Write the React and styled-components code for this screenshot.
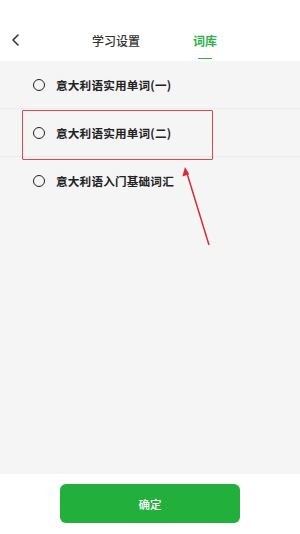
import React from "react";
import styled, { createGlobalStyle } from "styled-components";

const Global = createGlobalStyle`
  html, body { margin: 0; padding: 0; }
  body { font-family: "Noto Sans CJK SC", "Noto Sans", sans-serif; background: #fff; }
`;

const Page = styled.div`
  width: 300px;
  height: 534px;
  display: flex;
  flex-direction: column;
  position: relative;
  overflow: hidden;
`;

const Header = styled.div`
  height: 61px;
  background: #fff;
  position: relative;
  display: flex;
  align-items: flex-end;
  padding-bottom: 11px;
  box-sizing: border-box;
`;

const BackBtn = styled.div`
  width: 32px;
  height: 20px;
  display: flex;
  align-items: center;
  justify-content: center;
`;

const Tabs = styled.div`
  flex: 1;
  display: flex;
  padding-left: 60px;
  gap: 53px;
`;

const Tab = styled.div`
  position: relative;
  font-size: 12px;
  font-weight: ${p => (p.$active ? 600 : 500)};
  color: ${p => (p.$active ? "#2fb24a" : "#333")};
  line-height: 18px;
  &::after {
    content: "";
    display: ${p => (p.$active ? "block" : "none")};
    position: absolute;
    left: 50%;
    transform: translateX(-50%);
    bottom: -9px;
    width: 14px;
    height: 1px;
    background: #2fb24a;
  }
`;

const List = styled.div`
  flex: 1;
  background: #f5f5f5;
  display: flex;
  flex-direction: column;
`;

const Row = styled.div`
  height: 48px;
  display: flex;
  align-items: center;
  padding-left: 33px;
  box-sizing: border-box;
  border-bottom: ${p => (p.$last ? "none" : "1px solid #ebebeb")};
`;

const Radio = styled.span`
  flex-shrink: 0;
  width: 10px;
  height: 10px;
  border-radius: 50%;
  border: 1.5px solid #222;
  margin-right: 11px;
`;

const Label = styled.span`
  font-size: 11.6px;
  font-weight: 700;
  color: #222;
  letter-spacing: 0.2px;
`;

const Footer = styled.div`
  height: 60px;
  background: #fff;
  display: flex;
  justify-content: center;
  padding-top: 10px;
  box-sizing: border-box;
`;

const Confirm = styled.button`
  width: 180px;
  height: 39px;
  border: none;
  border-radius: 6px;
  background: #22af3b;
  color: #fff;
  font-family: "Noto Sans CJK SC", sans-serif;
  font-size: 11.5px;
  font-weight: 500;
`;

const Highlight = styled.div`
  position: absolute;
  left: 22px;
  top: 110px;
  width: 191px;
  height: 50px;
  border: 1.5px solid #e0474c;
  box-sizing: border-box;
  border-radius: 1px;
`;

const ArrowSvg = styled.svg`
  position: absolute;
  left: 170px;
  top: 160px;
`;

const items = ["意大利语实用单词(一)", "意大利语实用单词(二)", "意大利语入门基础词汇"];

export default function App() {
  return (
    <Page>
      <Global />
      <Header>
        <BackBtn>
          <svg width="10" height="12" viewBox="0 0 10 12">
            <path d="M7 1 L2 6 L7 11" fill="none" stroke="#333" strokeWidth="1.6" strokeLinecap="round" strokeLinejoin="round" />
          </svg>
        </BackBtn>
        <Tabs>
          <Tab>学习设置</Tab>
          <Tab $active>词库</Tab>
        </Tabs>
      </Header>
      <List>
        {items.map((t, i) => (
          <Row key={t} $last={i === items.length - 1}>
            <Radio />
            <Label>{t}</Label>
          </Row>
        ))}
      </List>
      <Footer>
        <Confirm>确定</Confirm>
      </Footer>
      <Highlight />
      <ArrowSvg width="50" height="90" viewBox="0 0 50 90">
        <path d="M39 85 L16 10" stroke="#d42f37" strokeWidth="1.5" fill="none" />
        <path d="M15 7 L12.3 16.5 L19.3 14.3 Z" fill="#d42f37" />
      </ArrowSvg>
    </Page>
  );
}
